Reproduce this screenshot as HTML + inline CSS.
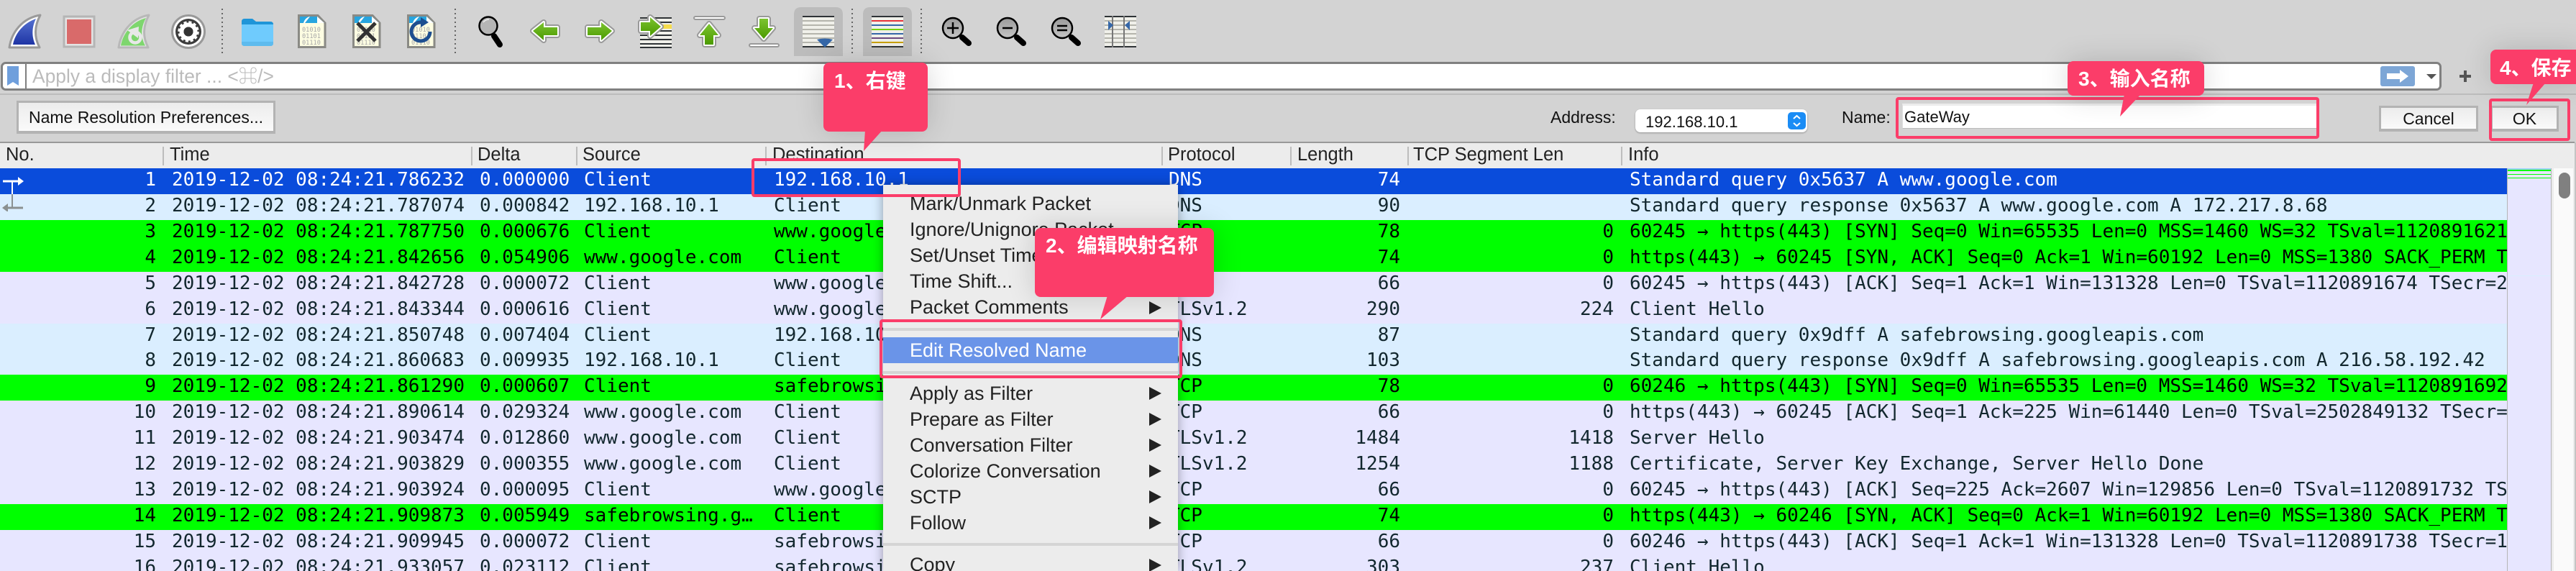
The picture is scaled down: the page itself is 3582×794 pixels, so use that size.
<!DOCTYPE html>
<html><head><meta charset="utf-8"><style>
html,body{margin:0;padding:0;width:3582px;height:794px;overflow:hidden;background:#d3d3d3}
body{position:relative;font-family:"Liberation Sans","Noto Sans CJK SC",sans-serif}
.a{position:absolute;white-space:nowrap}
.ui{font-size:23px;line-height:30px;color:#111}
.btn{position:absolute;box-sizing:border-box;border:3px solid #b3b3b3;border-bottom-width:4px;background:linear-gradient(#ececec,#fafafa);text-align:center;font-size:23px;color:#111}
.hd{position:absolute;top:199px;left:0;width:3580px;height:35px;background:#ececec;border-top:2px solid #999;box-sizing:content-box;margin-top:-2px}
.hd i{position:absolute;top:5px;height:26px;width:2px;background:#bdbdbd}
.hd b{position:absolute;top:0;font-weight:normal;font-size:25.5px;line-height:33px;color:#222}
#rows{position:absolute;left:0;top:234px;width:3486px;height:560px;overflow:hidden;font-family:"DejaVu Sans Mono","Liberation Mono",monospace;font-size:26px;color:#12272e}
.r{position:relative;height:35.93px;line-height:32px;background:#e7e6ff}
.r span{position:absolute;top:0;height:36px;white-space:pre;overflow:hidden}
.n{left:140px;width:77px;text-align:right}.t{left:239px;width:420px}.d{left:667px;width:130px}.s{left:812px;width:250px}.e{left:1076px;width:530px}.p{left:1625px;width:165px}.l{left:1800px;width:147px;text-align:right}.c{left:2050px;width:194px;text-align:right}.i{left:2266px;width:1220px}
.g{background:#00ff00;color:#000}.b{background:#daeeff}.sel{background:#0a4cdb;color:#fff}
#menu{position:absolute;left:1228px;top:257px;width:410px;height:537px;background:#ececec;box-shadow:0 0 14px rgba(0,0,0,.35);color:#222;font-size:27px}
#menu div{position:absolute;left:37px;line-height:36px;height:36px;white-space:nowrap}
#menu u{position:absolute;left:370px;width:0;height:0;border-left:17px solid #222;border-top:9px solid transparent;border-bottom:9px solid transparent;text-decoration:none}
#menu s{position:absolute;left:0;width:410px;height:4px;background:#d5d5d5}
.cal{position:absolute;background:#fb3d69;border-radius:8px;box-shadow:0 0 40px rgba(0,0,0,.16);color:#fff;font-weight:bold;font-size:28px;white-space:nowrap;box-sizing:border-box}
.box{position:absolute;box-sizing:border-box;border:4px solid #fb3d69;border-radius:4px}
</style></head><body>

<svg class="a" style="left:0;top:0" width="1600" height="84" viewBox="0 0 1600 84">
<defs>
<linearGradient id="bl" x1="0" y1="0" x2="0" y2="1"><stop offset="0" stop-color="#5470d0"/><stop offset="1" stop-color="#1f35a5"/></linearGradient>
<linearGradient id="gr" x1="0" y1="0" x2="0" y2="1"><stop offset="0" stop-color="#7cc430"/><stop offset="1" stop-color="#4b9a00"/></linearGradient>
<linearGradient id="ln" x1="0" y1="0" x2="0" y2="1"><stop offset="0" stop-color="#999"/><stop offset="1" stop-color="#c6c6c6"/></linearGradient>
</defs>
<!-- shark -->
<path d="M13 66C16 45 31 25 56 21C48 36 47 51 55 66Z" fill="#fff" stroke="#9a9a9a" stroke-width="3" stroke-linejoin="round"/>
<path d="M18 62C21 46 33 32 50 26C44 38 44 51 49 62Z" fill="url(#bl)"/>
<!-- stop -->
<rect x="89" y="23" width="42" height="42" fill="#e4e4e4" stroke="#b5b5b5" stroke-width="3"/>
<rect x="93" y="27" width="34" height="34" fill="#d96a6a"/>
<!-- restart -->
<path d="M165 66C168 45 183 25 207 21C199 36 198 51 206 66Z" fill="#e6e6e6" stroke="#b8b8b8" stroke-width="3" stroke-linejoin="round"/>
<path d="M168 63.500C171 46 184 30 203 25C196 38 195 51 202 63.500Z" fill="#7ed66e"/>
<circle cx="188" cy="52" r="7.500" fill="none" stroke="#e8e8e8" stroke-width="4.500"/>
<path d="M177 42L193 37L192 53Z" fill="#e8e8e8"/>
<!-- gear -->
<circle cx="262" cy="44" r="22.500" fill="#fff" stroke="#999" stroke-width="3"/>
<circle cx="262" cy="44" r="18" fill="#3c3c3c"/>
<circle cx="262" cy="44" r="9.500" fill="none" stroke="#fff" stroke-width="6"/>
<circle cx="262" cy="44" r="13" fill="none" stroke="#fff" stroke-width="3.500" stroke-dasharray="4 2.800"/>
<circle cx="262" cy="44" r="6.500" fill="#333"/>
<!-- seps -->
<g stroke="#666" stroke-width="2" stroke-dasharray="2 4"><path d="M309 12V74M633 12V74M1185 12V74M1281 12V74"/></g>
<!-- folder -->
<path d="M336 30Q336 26 340 26H351L356 30H376Q380 30 380 34V38H336Z" fill="#1f95d8"/>
<path d="M336 34H380V60Q380 64 376 64H340Q336 64 336 60Z" fill="#6fcbfd"/>
<path d="M336 58H380V60Q380 64 376 64H340Q336 64 336 60Z" fill="#5ebbee"/>
<!-- docs -->
<g transform="translate(414,20)"><path d="M1.500 1.500H28L38 12V45.500H1.500Z" fill="#fdfde2" stroke="#8a8a85" stroke-width="3"/><path d="M3 3H27L37 12V12H3Z" fill="#27a5df"/><path d="M8 12C9 8 12 4 17 3L10 12Z" fill="#fff"/><path d="M27 3V12H37Z" fill="#fff"/><g font-family="DejaVu Sans Mono,monospace" font-size="8.600" fill="#a8a8a8"><text x="6" y="24">01010</text><text x="6" y="33">01101</text><text x="6" y="42">01110</text></g></g>
<g transform="translate(490,20)"><path d="M1.500 1.500H28L38 12V45.500H1.500Z" fill="#fdfde2" stroke="#8a8a85" stroke-width="3"/><path d="M3 3H27L37 12V12H3Z" fill="#27a5df"/><path d="M8 12C9 8 12 4 17 3L10 12Z" fill="#fff"/><path d="M27 3V12H37Z" fill="#fff"/><g font-family="DejaVu Sans Mono,monospace" font-size="8.600" fill="#a8a8a8"><text x="6" y="24">01010</text><text x="6" y="33">01101</text><text x="6" y="42">01110</text></g></g>
<path d="M497 32L522 57M522 32L497 57" stroke="#333" stroke-width="5"/>
<g transform="translate(566,20)"><path d="M1.500 1.500H28L38 12V45.500H1.500Z" fill="#fdfde2" stroke="#8a8a85" stroke-width="3"/><path d="M3 3H27L37 12V12H3Z" fill="#27a5df"/><path d="M8 12C9 8 12 4 17 3L10 12Z" fill="#fff"/><path d="M27 3V12H37Z" fill="#fff"/><g font-family="DejaVu Sans Mono,monospace" font-size="8.600" fill="#a8a8a8"><text x="6" y="24">01010</text><text x="6" y="33">01101</text><text x="6" y="42">01110</text></g></g>
<path d="M598 44A13 13 0 1 1 585 31" fill="none" stroke="#1e4f90" stroke-width="5"/>
<path d="M585 24L596 31L585 38Z" fill="#1e4f90"/>
<!-- magnifier -->
<circle cx="679" cy="36" r="12.500" fill="#b5b5b5" stroke="#000" stroke-width="2.500"/>
<path d="M672 31Q675 27 680 27" stroke="#eee" stroke-width="1.500" fill="none"/>
<path d="M687 50L695 62" stroke="#000" stroke-width="8" stroke-linecap="round"/>
<!-- arrows -->
<g stroke-linejoin="round">
<path d="M741 43L756 31V38H775V49H756V56Z" fill="#999" stroke="#999" stroke-width="8"/><path d="M741 43L756 31V38H775V49H756V56Z" fill="#fff" stroke="#fff" stroke-width="4"/><path d="M741 43L756 31V38H775V49H756V56Z" fill="url(#gr)"/>
<path d="M851 43L836 31V38H817V49H836V56Z" fill="#999" stroke="#999" stroke-width="8"/><path d="M851 43L836 31V38H817V49H836V56Z" fill="#fff" stroke="#fff" stroke-width="4"/><path d="M851 43L836 31V38H817V49H836V56Z" fill="url(#gr)"/>
<!-- jump -->
<rect x="890" y="24" width="44" height="43" fill="#f0f0ea"/>
<path d="M890 25H934M890 31H934M890 37H934M890 43H934M890 49H934M890 55H934M890 61H934M890 66H934" stroke="#2f3336" stroke-width="2"/>
<rect x="918" y="34" width="16" height="6" fill="#f7dc4a"/>
<path d="M919 37L904 24V31H891V43H904V50Z" fill="#999" stroke="#999" stroke-width="8"/><path d="M919 37L904 24V31H891V43H904V50Z" fill="#fff" stroke="#fff" stroke-width="4"/><path d="M919 37L904 24V31H891V43H904V50Z" fill="url(#gr)"/>
<!-- up -->
<rect x="965" y="23" width="43" height="4" rx="2" fill="#fff" stroke="#999" stroke-width="2"/>
<path d="M986 33L973 49H980V62H992V49H999Z" fill="#999" stroke="#999" stroke-width="8"/><path d="M986 33L973 49H980V62H992V49H999Z" fill="#fff" stroke="#fff" stroke-width="4"/><path d="M986 33L973 49H980V62H992V49H999Z" fill="url(#gr)"/>
<!-- down -->
<rect x="1042" y="61" width="41" height="4" rx="2" fill="#fff" stroke="#999" stroke-width="2"/>
<path d="M1062 54L1049 39H1056V26H1068V39H1075Z" fill="#999" stroke="#999" stroke-width="8"/><path d="M1062 54L1049 39H1056V26H1068V39H1075Z" fill="#fff" stroke="#fff" stroke-width="4"/><path d="M1062 54L1049 39H1056V26H1068V39H1075Z" fill="url(#gr)"/>
</g>
<!-- toggled -->
<path d="M1104 78V20Q1104 10 1114 10H1162Q1172 10 1172 20V78Z" fill="#bcbcbc"/>
<path d="M1200 78V20Q1200 10 1210 10H1258Q1268 10 1268 20V78Z" fill="#bcbcbc"/>
<rect x="1116" y="22" width="44" height="44" fill="#f0f0ea"/>
<path d="M1116 29H1160M1116 35H1160M1116 41H1160M1116 47H1160M1116 53H1160M1116 59H1160" stroke="#b5b5ad" stroke-width="2"/>
<path d="M1116 23H1160M1116 65H1160" stroke="#2f3336" stroke-width="2"/>
<path d="M1136 55Q1147 52 1158 55L1147 66Z" fill="#3567a8"/>
<rect x="1212" y="22" width="44" height="44" fill="#f0f0ea"/>
<path d="M1212 23H1256M1212 65H1256" stroke="#2f3336" stroke-width="2"/>
<path d="M1212 29H1256" stroke="#e8333a" stroke-width="2"/><path d="M1212 35H1256" stroke="#3567a8" stroke-width="2"/><path d="M1212 41H1256" stroke="#75d010" stroke-width="2"/><path d="M1212 47H1256" stroke="#3567a8" stroke-width="2"/><path d="M1212 53H1256" stroke="#6e4a80" stroke-width="2"/><path d="M1212 59H1256" stroke="#c8a000" stroke-width="2"/>
<!-- zooms -->
<g stroke="#000">
<circle cx="1325" cy="39" r="14" fill="url(#ln)" stroke-width="2.500"/><path d="M1338 52L1347 60" stroke-width="8" stroke-linecap="round"/><path d="M1317 39H1333M1325 31V47" stroke-width="2.500"/>
<circle cx="1401" cy="39" r="14" fill="url(#ln)" stroke-width="2.500"/><path d="M1414 52L1423 60" stroke-width="8" stroke-linecap="round"/><path d="M1394 39H1408" stroke-width="2.500"/>
<circle cx="1477" cy="39" r="14" fill="url(#ln)" stroke-width="2.500"/><path d="M1490 52L1499 60" stroke-width="8" stroke-linecap="round"/><path d="M1470 36H1484M1470 42H1484" stroke-width="2.500"/>
</g>
<rect x="1536" y="22" width="44" height="44" fill="#f0f0ea"/>
<path d="M1536 29H1580M1536 35H1580M1536 41H1580M1536 47H1580M1536 53H1580M1536 59H1580" stroke="#b5b5ad" stroke-width="2"/>
<path d="M1536 23H1580M1536 65H1580" stroke="#2f3336" stroke-width="2"/>
<path d="M1547 22V66M1563 22V66" stroke="#777" stroke-width="2"/>
<path d="M1541 29L1548 35L1541 42Z" fill="#3567a8"/><path d="M1571 29L1564 35L1571 42Z" fill="#3567a8"/>
</svg>

<!-- filter bar -->
<div class="a" style="left:1px;top:86px;width:3394px;height:40px;box-sizing:border-box;background:#fff;border:3px solid #808080;border-radius:7px"></div>
<div class="a" style="left:35px;top:88px;width:2px;height:36px;background:#808080"></div>
<svg class="a" style="left:8px;top:90px" width="20" height="32"><path d="M2 2H18V29L10 24L2 29Z" fill="#6f9fdc"/></svg>
<div class="a" style="left:45px;top:90px;font-size:26.400px;line-height:32px;color:#bbb">Apply a display filter ... &lt;⌘/&gt;</div>
<svg class="a" style="left:3305px;top:88px" width="140" height="36"><rect x="5" y="4" width="48" height="28" rx="3" fill="#7da6d6"/><path d="M14 14H32V9L44 18L32 27V22H14Z" fill="#fff"/><path d="M69 15H83L76 22Z" fill="#555"/><path d="M115 18H131M123 10V26" stroke="#555" stroke-width="4"/></svg>
<div class="a" style="left:0;top:130px;width:3582px;height:2px;background:#bcbcbc"></div>

<!-- name resolution bar -->
<div class="btn" style="left:23px;top:140px;width:360px;height:46px;line-height:40px">Name Resolution Preferences...</div>
<div class="a ui" style="left:2156px;top:148px">Address:</div>
<div class="a" style="left:2274px;top:152px;width:239px;height:32px;background:#fff;border-radius:7px;box-shadow:0 1px 2px rgba(0,0,0,.3)"></div>
<div class="a" style="left:2288px;top:155px;font-size:22px;line-height:30px;color:#111">192.168.10.1</div>
<svg class="a" style="left:2486px;top:156px" width="25" height="24"><rect width="25" height="24" rx="5" fill="#1a8cf5"/><path d="M8 9L12.500 5L17 9M8 15L12.500 19L17 15" fill="none" stroke="#fff" stroke-width="2"/></svg>
<div class="a ui" style="left:2561px;top:148px">Name:</div>
<div class="a" style="left:2645px;top:144px;width:578px;height:35px;box-sizing:border-box;background:#fff;border-top:3px solid #ececec;border-left:1px solid #ddd;border-bottom:1px solid #bbb"></div>
<div class="a" style="left:2648px;top:149px;font-size:22px;line-height:28px;color:#111">GateWay</div>
<div class="btn" style="left:3308px;top:147px;width:138px;height:36px;line-height:30px">Cancel</div>
<div class="btn" style="left:3463px;top:147px;width:95px;height:36px;line-height:30px">OK</div>

<!-- header -->
<div class="hd">
<i style="left:226px"></i><i style="left:655px"></i><i style="left:801px"></i><i style="left:1064px"></i><i style="left:1615px"></i><i style="left:1794px"></i><i style="left:1957px"></i><i style="left:2254px"></i>
<b style="left:8px">No.</b><b style="left:236px">Time</b><b style="left:664px">Delta</b><b style="left:810px">Source</b><b style="left:1074px">Destination</b><b style="left:1624px">Protocol</b><b style="left:1804px">Length</b><b style="left:1965px">TCP Segment Len</b><b style="left:2264px">Info</b>
</div>

<!-- rows -->
<div id="rows">
<div class="r sel"><span class="n">1</span><span class="t">2019-12-02 08:24:21.786232</span><span class="d">0.000000</span><span class="s">Client</span><span class="e">192.168.10.1</span><span class="p">DNS</span><span class="l">74</span><span class="i">Standard query 0x5637 A www.google.com</span></div>
<div class="r b"><span class="n">2</span><span class="t">2019-12-02 08:24:21.787074</span><span class="d">0.000842</span><span class="s">192.168.10.1</span><span class="e">Client</span><span class="p">DNS</span><span class="l">90</span><span class="i">Standard query response 0x5637 A www.google.com A 172.217.8.68</span></div>
<div class="r g"><span class="n">3</span><span class="t">2019-12-02 08:24:21.787750</span><span class="d">0.000676</span><span class="s">Client</span><span class="e">www.google.com</span><span class="p">TCP</span><span class="l">78</span><span class="c">0</span><span class="i">60245 → https(443) [SYN] Seq=0 Win=65535 Len=0 MSS=1460 WS=32 TSval=1120891621 TSecr=0</span></div>
<div class="r g"><span class="n">4</span><span class="t">2019-12-02 08:24:21.842656</span><span class="d">0.054906</span><span class="s">www.google.com</span><span class="e">Client</span><span class="p">TCP</span><span class="l">74</span><span class="c">0</span><span class="i">https(443) → 60245 [SYN, ACK] Seq=0 Ack=1 Win=60192 Len=0 MSS=1380 SACK_PERM TSval=25</span></div>
<div class="r"><span class="n">5</span><span class="t">2019-12-02 08:24:21.842728</span><span class="d">0.000072</span><span class="s">Client</span><span class="e">www.google.com</span><span class="p">TCP</span><span class="l">66</span><span class="c">0</span><span class="i">60245 → https(443) [ACK] Seq=1 Ack=1 Win=131328 Len=0 TSval=1120891674 TSecr=2502849</span></div>
<div class="r"><span class="n">6</span><span class="t">2019-12-02 08:24:21.843344</span><span class="d">0.000616</span><span class="s">Client</span><span class="e">www.google.com</span><span class="p">TLSv1.2</span><span class="l">290</span><span class="c">224</span><span class="i">Client Hello</span></div>
<div class="r b"><span class="n">7</span><span class="t">2019-12-02 08:24:21.850748</span><span class="d">0.007404</span><span class="s">Client</span><span class="e">192.168.10.1</span><span class="p">DNS</span><span class="l">87</span><span class="i">Standard query 0x9dff A safebrowsing.googleapis.com</span></div>
<div class="r b"><span class="n">8</span><span class="t">2019-12-02 08:24:21.860683</span><span class="d">0.009935</span><span class="s">192.168.10.1</span><span class="e">Client</span><span class="p">DNS</span><span class="l">103</span><span class="i">Standard query response 0x9dff A safebrowsing.googleapis.com A 216.58.192.42</span></div>
<div class="r g"><span class="n">9</span><span class="t">2019-12-02 08:24:21.861290</span><span class="d">0.000607</span><span class="s">Client</span><span class="e">safebrowsing.googleapis.com</span><span class="p">TCP</span><span class="l">78</span><span class="c">0</span><span class="i">60246 → https(443) [SYN] Seq=0 Win=65535 Len=0 MSS=1460 WS=32 TSval=1120891692 TSecr=0</span></div>
<div class="r"><span class="n">10</span><span class="t">2019-12-02 08:24:21.890614</span><span class="d">0.029324</span><span class="s">www.google.com</span><span class="e">Client</span><span class="p">TCP</span><span class="l">66</span><span class="c">0</span><span class="i">https(443) → 60245 [ACK] Seq=1 Ack=225 Win=61440 Len=0 TSval=2502849132 TSecr=11208</span></div>
<div class="r"><span class="n">11</span><span class="t">2019-12-02 08:24:21.903474</span><span class="d">0.012860</span><span class="s">www.google.com</span><span class="e">Client</span><span class="p">TLSv1.2</span><span class="l">1484</span><span class="c">1418</span><span class="i">Server Hello</span></div>
<div class="r"><span class="n">12</span><span class="t">2019-12-02 08:24:21.903829</span><span class="d">0.000355</span><span class="s">www.google.com</span><span class="e">Client</span><span class="p">TLSv1.2</span><span class="l">1254</span><span class="c">1188</span><span class="i">Certificate, Server Key Exchange, Server Hello Done</span></div>
<div class="r"><span class="n">13</span><span class="t">2019-12-02 08:24:21.903924</span><span class="d">0.000095</span><span class="s">Client</span><span class="e">www.google.com</span><span class="p">TCP</span><span class="l">66</span><span class="c">0</span><span class="i">60245 → https(443) [ACK] Seq=225 Ack=2607 Win=129856 Len=0 TSval=1120891732 TSecr=2</span></div>
<div class="r g"><span class="n">14</span><span class="t">2019-12-02 08:24:21.909873</span><span class="d">0.005949</span><span class="s">safebrowsing.g…</span><span class="e">Client</span><span class="p">TCP</span><span class="l">74</span><span class="c">0</span><span class="i">https(443) → 60246 [SYN, ACK] Seq=0 Ack=1 Win=60192 Len=0 MSS=1380 SACK_PERM TSval=25</span></div>
<div class="r"><span class="n">15</span><span class="t">2019-12-02 08:24:21.909945</span><span class="d">0.000072</span><span class="s">Client</span><span class="e">safebrowsing.googleapis.com</span><span class="p">TCP</span><span class="l">66</span><span class="c">0</span><span class="i">60246 → https(443) [ACK] Seq=1 Ack=1 Win=131328 Len=0 TSval=1120891738 TSecr=1120891</span></div>
<div class="r"><span class="n">16</span><span class="t">2019-12-02 08:24:21.933057</span><span class="d">0.023112</span><span class="s">Client</span><span class="e">safebrowsing.googleapis.com</span><span class="p">TLSv1.2</span><span class="l">303</span><span class="c">237</span><span class="i">Client Hello</span></div>
</div>

<!-- gutter marks -->
<svg class="a" style="left:0;top:234px" width="40" height="60"><path d="M17 18V36" stroke="#fff" stroke-width="2"/><path d="M4 18H26" stroke="#fff" stroke-width="3"/><path d="M25 12L33 18L25 24Z" fill="#fff"/><path d="M17 36V55" stroke="#8a9090" stroke-width="2"/><path d="M10 55H32" stroke="#8a9090" stroke-width="3"/><path d="M11 49L3 55L11 61Z" fill="#8a9090"/></svg>

<!-- map + scrollbar -->
<div class="a" style="left:3486px;top:234px;width:62px;height:560px;box-sizing:border-box;background:#e7e6ff;border-left:1px solid #b5b5b5;border-right:1px solid #b5b5b5"></div>
<div class="a" style="left:3487px;top:234px;width:60px;height:2px;background:#9cd4f5"></div>
<div class="a" style="left:3487px;top:236px;width:60px;height:2px;background:#00ff00"></div>
<div class="a" style="left:3487px;top:242px;width:60px;height:1px;background:#00ff00"></div>
<div class="a" style="left:3487px;top:247px;width:60px;height:1px;background:#00ff00"></div>
<div class="a" style="left:3487px;top:383px;width:60px;height:1px;background:#daeeff"></div>
<div class="a" style="left:3548px;top:234px;width:32px;height:560px;background:#ececec"></div>
<div class="a" style="left:3551px;top:234px;width:27px;height:560px;background:#fafafa"></div>
<div class="a" style="left:3558px;top:240px;width:16px;height:36px;background:#808080;border-radius:8px"></div>
<div class="a" style="left:3580px;top:198px;width:2px;height:596px;background:#c4c4c4"></div>

<!-- context menu -->
<div id="menu">
<div style="top:8px">Mark/Unmark Packet</div>
<div style="top:44px">Ignore/Unignore Packet</div>
<div style="top:80px">Set/Unset Time Reference</div>
<div style="top:116px">Time Shift...</div>
<div style="top:152px">Packet Comments</div><u style="top:162px"></u>
<s style="top:199px"></s>
<p style="position:absolute;margin:0;left:0;top:212px;width:410px;height:36px;background:#6a94e8"></p>
<div style="top:212px;color:#fff">Edit Resolved Name</div>
<s style="top:259px"></s>
<div style="top:272px">Apply as Filter</div><u style="top:281px"></u>
<div style="top:308px">Prepare as Filter</div><u style="top:317px"></u>
<div style="top:344px">Conversation Filter</div><u style="top:353px"></u>
<div style="top:380px">Colorize Conversation</div><u style="top:389px"></u>
<div style="top:416px">SCTP</div><u style="top:425px"></u>
<div style="top:452px">Follow</div><u style="top:461px"></u>
<s style="top:498px"></s>
<div style="top:510px">Copy</div><u style="top:520px"></u>
</div>

<!-- red boxes -->
<div class="box" style="left:1045px;top:220px;width:291px;height:54px"></div>
<div class="box" style="left:1223px;top:444px;width:421px;height:82px"></div>
<div class="box" style="left:2636px;top:135px;width:589px;height:58px"></div>
<div class="box" style="left:3461px;top:137px;width:113px;height:59px"></div>

<!-- callouts -->
<div class="cal" style="left:1145px;top:87px;width:145px;height:96px;padding:10px 0 0 15px;line-height:32px">1、右键</div>
<div class="cal" style="left:1439px;top:317px;width:249px;height:96px;padding:9px 0 0 15px;line-height:32px">2、编辑映射名称</div>
<div class="cal" style="left:2875px;top:85px;width:190px;height:48px;padding:9px 0 0 15px;line-height:32px">3、输入名称</div>
<div class="cal" style="left:3463px;top:69px;width:130px;height:48px;padding:10px 0 0 13px;line-height:32px">4、保存</div>
<svg class="a" style="left:0;top:0" width="3582" height="794"><g fill="#fb3d69"><path d="M1203 181H1227L1201 210Z"/><path d="M1540 411H1569L1530 444Z"/><path d="M2954 131H2977L2948 162Z"/><path d="M3523 115H3540L3513 146Z"/></g></svg>
</body></html>
